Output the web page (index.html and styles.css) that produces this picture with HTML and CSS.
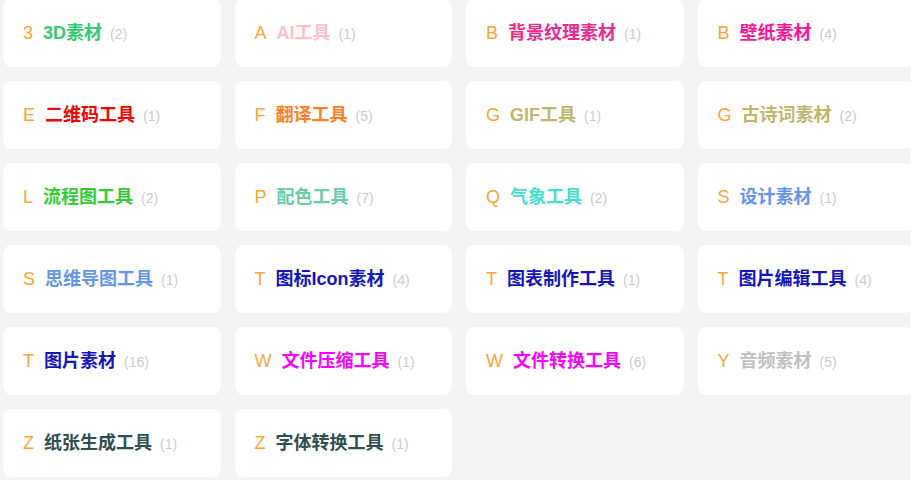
FILE: index.html
```html
<!DOCTYPE html>
<html lang="zh">
<head>
<meta charset="utf-8">
<link rel="stylesheet" href="styles.css">
</head>
<body>
<div class="grid">
  <div class="card"><div class="label"><span class="letter">3</span><span class="name c-green">3D素材</span><span class="count">(2)</span></div></div>
  <div class="card"><div class="label"><span class="letter">A</span><span class="name c-pink">AI工具</span><span class="count">(1)</span></div></div>
  <div class="card"><div class="label"><span class="letter">B</span><span class="name c-rose">背景纹理素材</span><span class="count">(1)</span></div></div>
  <div class="card"><div class="label"><span class="letter">B</span><span class="name c-deeppink">壁纸素材</span><span class="count">(4)</span></div></div>
  <div class="card"><div class="label"><span class="letter">E</span><span class="name c-red">二维码工具</span><span class="count">(1)</span></div></div>
  <div class="card"><div class="label"><span class="letter">F</span><span class="name c-orange">翻译工具</span><span class="count">(5)</span></div></div>
  <div class="card"><div class="label"><span class="letter">G</span><span class="name c-khaki">GIF工具</span><span class="count">(1)</span></div></div>
  <div class="card"><div class="label"><span class="letter">G</span><span class="name c-khaki">古诗词素材</span><span class="count">(2)</span></div></div>
  <div class="card"><div class="label"><span class="letter">L</span><span class="name c-lime">流程图工具</span><span class="count">(2)</span></div></div>
  <div class="card"><div class="label"><span class="letter">P</span><span class="name c-aqua">配色工具</span><span class="count">(7)</span></div></div>
  <div class="card"><div class="label"><span class="letter">Q</span><span class="name c-turq">气象工具</span><span class="count">(2)</span></div></div>
  <div class="card"><div class="label"><span class="letter">S</span><span class="name c-corn">设计素材</span><span class="count">(1)</span></div></div>
  <div class="card"><div class="label"><span class="letter">S</span><span class="name c-corn">思维导图工具</span><span class="count">(1)</span></div></div>
  <div class="card"><div class="label"><span class="letter">T</span><span class="name c-blue">图标Icon素材</span><span class="count">(4)</span></div></div>
  <div class="card"><div class="label"><span class="letter">T</span><span class="name c-blue">图表制作工具</span><span class="count">(1)</span></div></div>
  <div class="card"><div class="label"><span class="letter">T</span><span class="name c-blue">图片编辑工具</span><span class="count">(4)</span></div></div>
  <div class="card"><div class="label"><span class="letter">T</span><span class="name c-blue">图片素材</span><span class="count">(16)</span></div></div>
  <div class="card"><div class="label"><span class="letter">W</span><span class="name c-magenta">文件压缩工具</span><span class="count">(1)</span></div></div>
  <div class="card"><div class="label"><span class="letter">W</span><span class="name c-magenta">文件转换工具</span><span class="count">(6)</span></div></div>
  <div class="card"><div class="label"><span class="letter">Y</span><span class="name c-silver">音频素材</span><span class="count">(5)</span></div></div>
  <div class="card"><div class="label"><span class="letter">Z</span><span class="name c-slate">纸张生成工具</span><span class="count">(1)</span></div></div>
  <div class="card"><div class="label"><span class="letter">Z</span><span class="name c-slate">字体转换工具</span><span class="count">(1)</span></div></div>
</div>
</body>
</html>
```
FILE: styles.css
```css
html, body {
  margin: 0;
  padding: 0;
  background: #f4f4f4;
  overflow: hidden;
  font-family: "Liberation Sans", "Noto Sans CJK SC", sans-serif;
}
.grid {
  display: grid;
  grid-template-columns: repeat(4, 217.5px);
  grid-auto-rows: 68px;
  column-gap: 14px;
  row-gap: 14px;
  padding-left: 3px;
  margin-top: -1px;
}
.card {
  background: #fff;
  border-radius: 8px;
  box-shadow: 0 0 1px rgba(0, 0, 0, 0.08);
  display: flex;
  align-items: center;
  padding-left: 20px;
  white-space: nowrap;
}
.label {
  line-height: 24px;
  padding-top: 1px;
}
.letter {
  color: #f8a633;
  font-size: 18px;
  margin-right: 10px;
}
.name {
  font-size: 18px;
  font-weight: bold;
  margin-right: 8px;
}
.count {
  color: #cccccc;
  font-size: 14px;
}
.c-green { color: #2ecc71; }
.c-pink { color: #ffc0cb; }
.c-rose { color: #f0288c; }
.c-deeppink { color: #ff1493; }
.c-red { color: #ff0000; }
.c-orange { color: #ff7f24; }
.c-khaki { color: #bdb76b; }
.c-lime { color: #32cd32; }
.c-aqua { color: #66cdaa; }
.c-turq { color: #40e0d0; }
.c-corn { color: #6495ed; }
.c-blue { color: #1414c0; }
.c-magenta { color: #ff00ff; }
.c-silver { color: #c0c0c0; }
.c-slate { color: #2f4f4f; }
```
